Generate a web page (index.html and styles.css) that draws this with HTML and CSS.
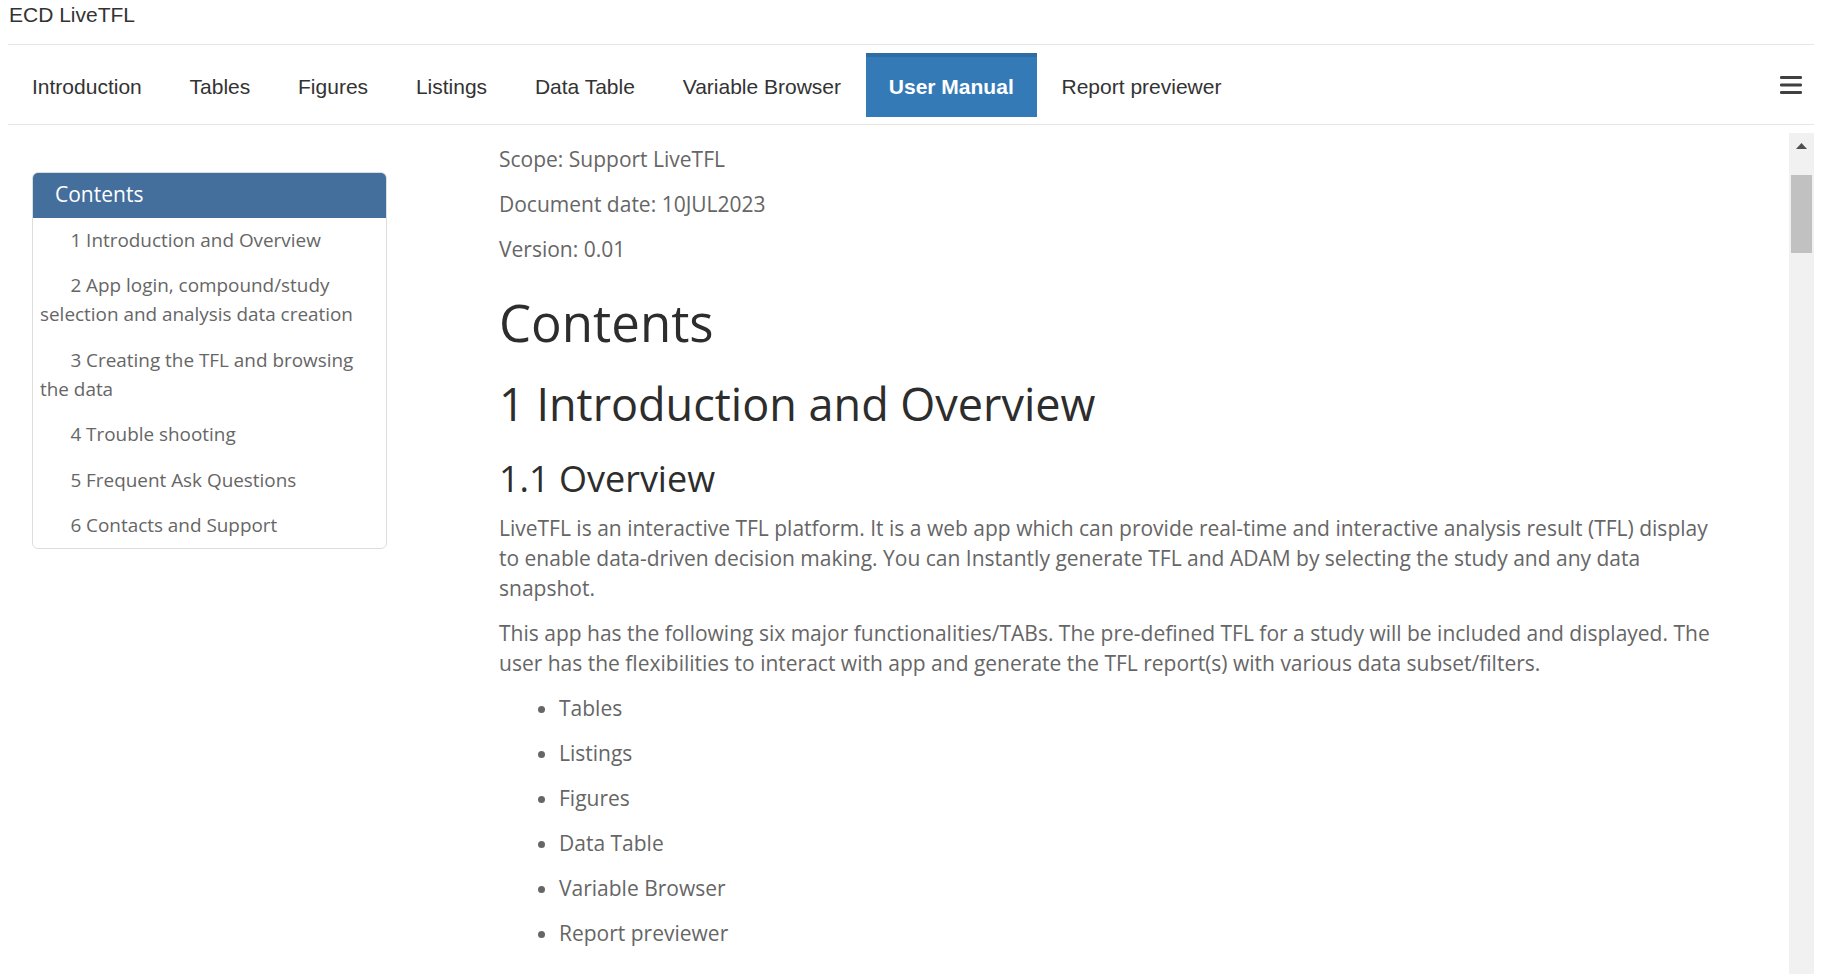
FILE: index.html
```html
<!DOCTYPE html>
<html lang="en">
<head>
<meta charset="utf-8">
<title>ECD LiveTFL</title>
<link rel="stylesheet" href="styles.css">
</head>
<body>
<div class="page">
  <div class="app-title">ECD LiveTFL</div>
  <nav class="navbar">
    <ul class="tabs">
      <li class="tab">Introduction</li>
      <li class="tab">Tables</li>
      <li class="tab">Figures</li>
      <li class="tab">Listings</li>
      <li class="tab">Data Table</li>
      <li class="tab">Variable Browser</li>
      <li class="tab active">User Manual</li>
      <li class="tab">Report previewer</li>
    </ul>
    <button class="menu-toggle" aria-label="Menu">
      <svg width="22" height="18" viewBox="0 0 22 18"><rect x="0" y="0" width="22" height="3" rx="1.3" fill="#404040"/><rect x="0" y="7.5" width="22" height="3" rx="1.3" fill="#404040"/><rect x="0" y="15" width="22" height="3" rx="1.3" fill="#404040"/></svg>
    </button>
  </nav>
  <div class="frame">
    <div class="doc">
      <aside class="toc">
        <div class="toc-head">Contents</div>
        <ul class="toc-list">
          <li class="toc-item">1 Introduction and Overview</li>
          <li class="toc-item">2 App login, compound/study selection and analysis data creation</li>
          <li class="toc-item">3 Creating the TFL and browsing the data</li>
          <li class="toc-item">4 Trouble shooting</li>
          <li class="toc-item">5 Frequent Ask Questions</li>
          <li class="toc-item">6 Contacts and Support</li>
        </ul>
      </aside>
      <main class="content">
        <p class="para">Scope: Support LiveTFL</p>
        <p class="para">Document date: 10JUL2023</p>
        <p class="para">Version: 0.01</p>
        <h1 class="heading-1">Contents</h1>
        <h2 class="heading-2">1 Introduction and Overview</h2>
        <h3 class="heading-3">1.1 Overview</h3>
        <p class="para">LiveTFL is an interactive TFL platform. It is a web app which can provide real-time and interactive analysis result (TFL) display to enable data-driven decision making. You can Instantly generate TFL and ADAM by selecting the study and any data snapshot.</p>
        <p class="para">This app has the following six major functionalities/TABs. The pre-defined TFL for a study will be included and displayed. The user has the flexibilities to interact with app and generate the TFL report(s) with various data subset/filters.</p>
        <ul class="bullets">
          <li class="bullet">Tables</li>
          <li class="bullet">Listings</li>
          <li class="bullet">Figures</li>
          <li class="bullet">Data Table</li>
          <li class="bullet">Variable Browser</li>
          <li class="bullet">Report previewer</li>
        </ul>
      </main>
    </div>
    <div class="scrollbar">
      <div class="scroll-btn">
        <svg width="11" height="6" viewBox="0 0 11 6"><polygon points="0,6 5.5,0 11,6" fill="#505050"/></svg>
      </div>
      <div class="scroll-thumb"></div>
    </div>
  </div>
</div>
</body>
</html>
```
FILE: styles.css
```css
html, body {
  margin: 0;
  padding: 0;
  background: #ffffff;
}

.page {
  box-sizing: border-box;
  height: 974px;
  padding: 0 20px 0 8px;
  overflow: hidden;
}

.app-title {
  height: 44px;
  padding-left: 1px;
  font-family: "Liberation Sans", Arial, sans-serif;
  font-size: 21px;
  line-height: 30px;
  color: #333333;
}

.navbar {
  display: flex;
  align-items: flex-start;
  height: 79px;
  border-top: 1px solid #e7e7e7;
  border-bottom: 1px solid #e7e7e7;
}

.tabs {
  display: flex;
  gap: 1.8px;
  list-style: none;
  margin: 8px 0 0 1px;
  padding: 0;
}

.tab {
  height: 60px;
  padding: 4px 23px 0;
  font-family: "Liberation Sans", Arial, sans-serif;
  font-size: 21px;
  line-height: 60px;
  color: #333333;
  white-space: nowrap;
}

.tab.active {
  padding-top: 0;
  border-top: 4px solid #2e6da4;
  background: #337ab7;
  color: #ffffff;
  font-weight: bold;
}

.menu-toggle {
  display: flex;
  margin: 31px 12px 0 auto;
  padding: 0;
  border: 0;
  background: none;
}

.frame {
  display: flex;
  height: 841px;
  margin-top: 8px;
  overflow: hidden;
}

.doc {
  flex: 1;
  min-width: 0;
  display: flex;
  align-items: flex-start;
  padding-left: 24px;
  font-family: "Open Sans", "Noto Sans", sans-serif;
}

.toc {
  flex: none;
  box-sizing: border-box;
  width: 355px;
  margin-top: 39px;
  border: 1px solid #dddddd;
  border-radius: 6px;
  overflow: hidden;
}

.toc-head {
  padding: 7px 22px 8px;
  background: #446e9b;
  color: #ffffff;
  font-size: 21px;
  line-height: 29.5px;
}

.toc-list {
  list-style: none;
  margin: 0;
  padding: 0 15px 0 7px;
}

.toc-item {
  padding: 8.05px 0;
  font-size: 18.9px;
  line-height: 29.3px;
  text-indent: 30.4px;
  color: #666666;
}

.content {
  flex: none;
  width: 1219px;
  margin-left: 112px;
  padding-top: 10.5px;
  font-size: 21px;
  line-height: 30px;
  color: #666666;
}

.para {
  margin: 0 0 15px;
}

.heading-1,
.heading-2,
.heading-3 {
  font-weight: 400;
  line-height: 1.1;
  color: #2d2d2d;
}

.heading-1 {
  margin: 30.5px 0 29px;
  font-size: 51px;
}

.heading-2 {
  margin: 0 0 30.5px;
  font-size: 45px;
}

.heading-3 {
  margin: 0 0 14.5px;
  font-size: 36px;
}

.bullets {
  margin: 0;
  padding-left: 60px;
  list-style: disc;
}

.bullet {
  margin-bottom: 15px;
}

.scrollbar {
  flex: none;
  display: flex;
  flex-direction: column;
  align-items: center;
  width: 25px;
  background: #f1f1f1;
}

.scroll-btn {
  display: flex;
  align-items: center;
  justify-content: center;
  width: 25px;
  height: 25px;
}

.scroll-thumb {
  width: 21px;
  height: 78px;
  margin-top: 17px;
  background: #c1c1c1;
}
```
